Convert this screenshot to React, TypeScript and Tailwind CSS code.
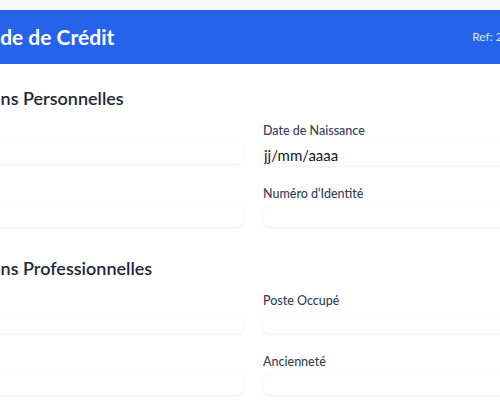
function Field({ label, date }: { label: string; date?: boolean }) {
  return (
    <div className="flex flex-col">
      <label className="text-[12.5px] leading-5 font-medium text-[#374151] mb-[3px]">{label}</label>
      {date ? (
        <input
          type="text"
          readOnly
          value="jj/mm/aaaa"
          className="w-full h-[22px] pl-px text-[15px] leading-5 text-[#111827] rounded-md bg-white outline-none shadow-[0_0_2px_0_rgba(0,0,0,0.06),0_1px_2px_0_rgba(0,0,0,0.05)]"
        />
      ) : (
        <input
          type="text"
          className="w-full h-5 text-sm rounded-md bg-white outline-none shadow-[0_0_2px_0_rgba(0,0,0,0.06),0_1px_2px_0_rgba(0,0,0,0.05)]"
        />
      )}
    </div>
  );
}

export default function App() {
  return (
    <div className="h-screen overflow-hidden bg-[#f9fafb] pt-[10px] flex" style={{ fontFamily: "Lato, sans-serif" }}>
      <div className="w-[721px] shrink-0 ml-[-107px] bg-white rounded-lg shadow-md">
        <div className="bg-[#2563eb] flex items-center justify-between pl-[40px] pr-[58px] py-[13px] rounded-t-lg">
          <h1 className="text-[21px] leading-7 font-bold text-white">Demande de Crédit</h1>
          <span className="text-xs text-[#dbeafe]">Ref: 2024-0158</span>
        </div>
        <div className="px-6 pt-5 pb-6 flex flex-col gap-[27px]">
          <section>
            <h2 className="text-lg leading-7 font-semibold text-[#1f2937] mb-[9px]">Informations Personnelles</h2>
            <div className="grid grid-cols-2 gap-x-[19px] gap-y-[18px]">
              <Field label="Nom Complet" />
              <Field label="Date de Naissance" date />
              <Field label="Email" />
              <Field label="Numéro d'Identité" />
            </div>
          </section>
          <section>
            <h2 className="text-lg leading-7 font-semibold text-[#1f2937] mb-[9px]">Informations Professionnelles</h2>
            <div className="grid grid-cols-2 gap-x-[19px] gap-y-[18px]">
              <Field label="Employeur" />
              <Field label="Poste Occupé" />
              <Field label="Revenu" />
              <Field label="Ancienneté" />
            </div>
          </section>
        </div>
      </div>
    </div>
  );
}
